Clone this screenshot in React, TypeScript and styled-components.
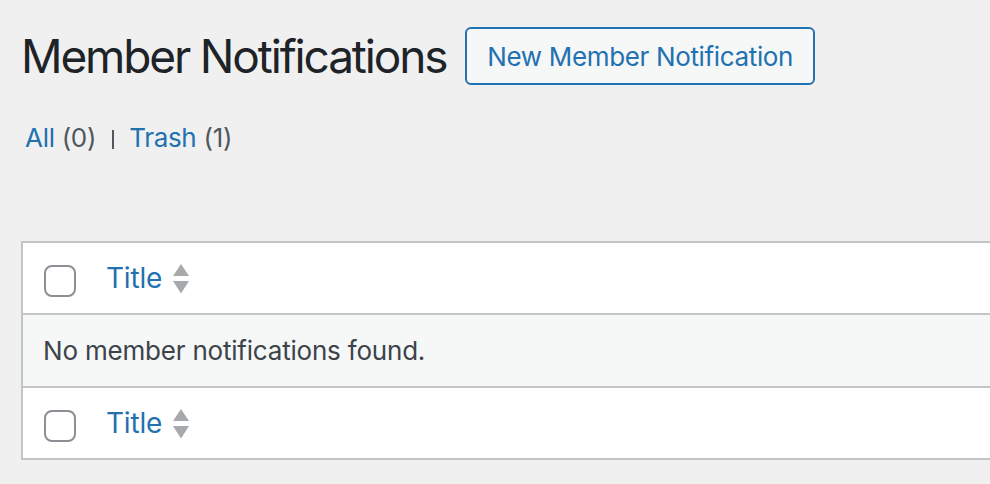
import React from 'react';
import styled, { createGlobalStyle } from 'styled-components';

const GlobalStyle = createGlobalStyle`
  html, body {
    margin: 0;
    padding: 0;
    background: #f0f0f1;
    overflow: hidden;
  }
  body {
    font-family: Inter, "Liberation Sans", sans-serif;
    color: #3c434a;
  }
`;

const Wrap = styled.div`
  padding: 26px 0 0 21px;
  width: 1010px;
`;

const HeadingRow = styled.div`
  display: flex;
  align-items: center;
  gap: 19px;
`;

const Heading = styled.h1`
  margin: 0;
  font-size: 46px;
  line-height: 60px;
  font-weight: 400;
  color: #1d2327;
  letter-spacing: -2.15px;
`;

const AddButton = styled.a`
  display: inline-flex;
  align-items: center;
  box-sizing: border-box;
  height: 58px;
  padding: 0 20px;
  border: 2px solid #2271b1;
  border-radius: 6px;
  background: #f6f7f7;
  color: #2271b1;
  font-size: 26px;
  letter-spacing: -0.35px;
  text-decoration: none;
  white-space: nowrap;
`;

const Views = styled.ul`
  list-style: none;
  margin: 32px 0 0 4px;
  padding: 0;
  display: flex;
  font-size: 26px;
  line-height: 39px;
  letter-spacing: -0.3px;
  color: #646970;
`;

const ViewItem = styled.li`
  display: flex;
  align-items: center;
  white-space: pre;
`;

const Separator = styled.span`
  display: block;
  flex: none;
  width: 2px;
  height: 19px;
  margin: 4px 15px 0 16px;
  background: #50575e;
`;

const ViewLink = styled.a`
  color: #2271b1;
  text-decoration: none;
`;

const Count = styled.span`
  color: #50575e;
`;

const Table = styled.table`
  margin-top: 84px;
  width: 100%;
  border-collapse: collapse;
  border: 2px solid #c3c4c7;
  background: #fff;
`;

const HeadCell = styled.th<{ $check?: boolean }>`
  text-align: left;
  font-weight: 400;
  font-size: 28px;
  line-height: 38px;
  padding: ${p => (p.$check ? '22px 0 0 21px' : '16px 20px')};
  width: ${p => (p.$check ? '42px' : 'auto')};
  vertical-align: top;
  border-bottom: 2px solid #c3c4c7;
`;

const FootCell = styled(HeadCell)`
  border-bottom: none;
  border-top: 2px solid #c3c4c7;
`;

const Checkbox = styled.span`
  display: block;
  box-sizing: border-box;
  width: 32px;
  height: 32px;
  border: 2px solid #8c8f94;
  border-radius: 8px;
  background: #fff;
`;

const SortLink = styled.a`
  display: inline-flex;
  align-items: center;
  gap: 11px;
  color: #2271b1;
  text-decoration: none;
  letter-spacing: -0.2px;
`;

const SortIcon = styled.svg`
  width: 16px;
  height: 30px;
  fill: #a7aaad;
  margin-top: 2px;
`;

const EmptyCell = styled.td`
  background: #f6f7f7;
  font-size: 26px;
  line-height: 39px;
  letter-spacing: -0.2px;
  padding: 16px 20px;
  color: #3c434a;
`;

const SortArrows = () => (
  <SortIcon viewBox="0 0 16 30">
    <polygon points="8,0 16,12 0,12" />
    <polygon points="0,17 16,17 8,29.5" />
  </SortIcon>
);

const TitleHeader = () => (
  <SortLink href="#">
    <span>Title</span>
    <SortArrows />
  </SortLink>
);

const App = () => (
  <>
    <GlobalStyle />
    <Wrap>
      <HeadingRow>
        <Heading>Member Notifications</Heading>
        <AddButton href="#">New Member Notification</AddButton>
      </HeadingRow>
      <Views>
        <ViewItem>
          <ViewLink href="#">All <Count>(0)</Count></ViewLink>
          <Separator aria-label="|" />
        </ViewItem>
        <ViewItem>
          <ViewLink href="#">Trash <Count>(1)</Count></ViewLink>
        </ViewItem>
      </Views>
      <Table>
        <thead>
          <tr>
            <HeadCell $check><Checkbox /></HeadCell>
            <HeadCell><TitleHeader /></HeadCell>
          </tr>
        </thead>
        <tbody>
          <tr>
            <EmptyCell colSpan={2}>No member notifications found.</EmptyCell>
          </tr>
        </tbody>
        <tfoot>
          <tr>
            <FootCell $check><Checkbox /></FootCell>
            <FootCell><TitleHeader /></FootCell>
          </tr>
        </tfoot>
      </Table>
    </Wrap>
  </>
);

export default App;
